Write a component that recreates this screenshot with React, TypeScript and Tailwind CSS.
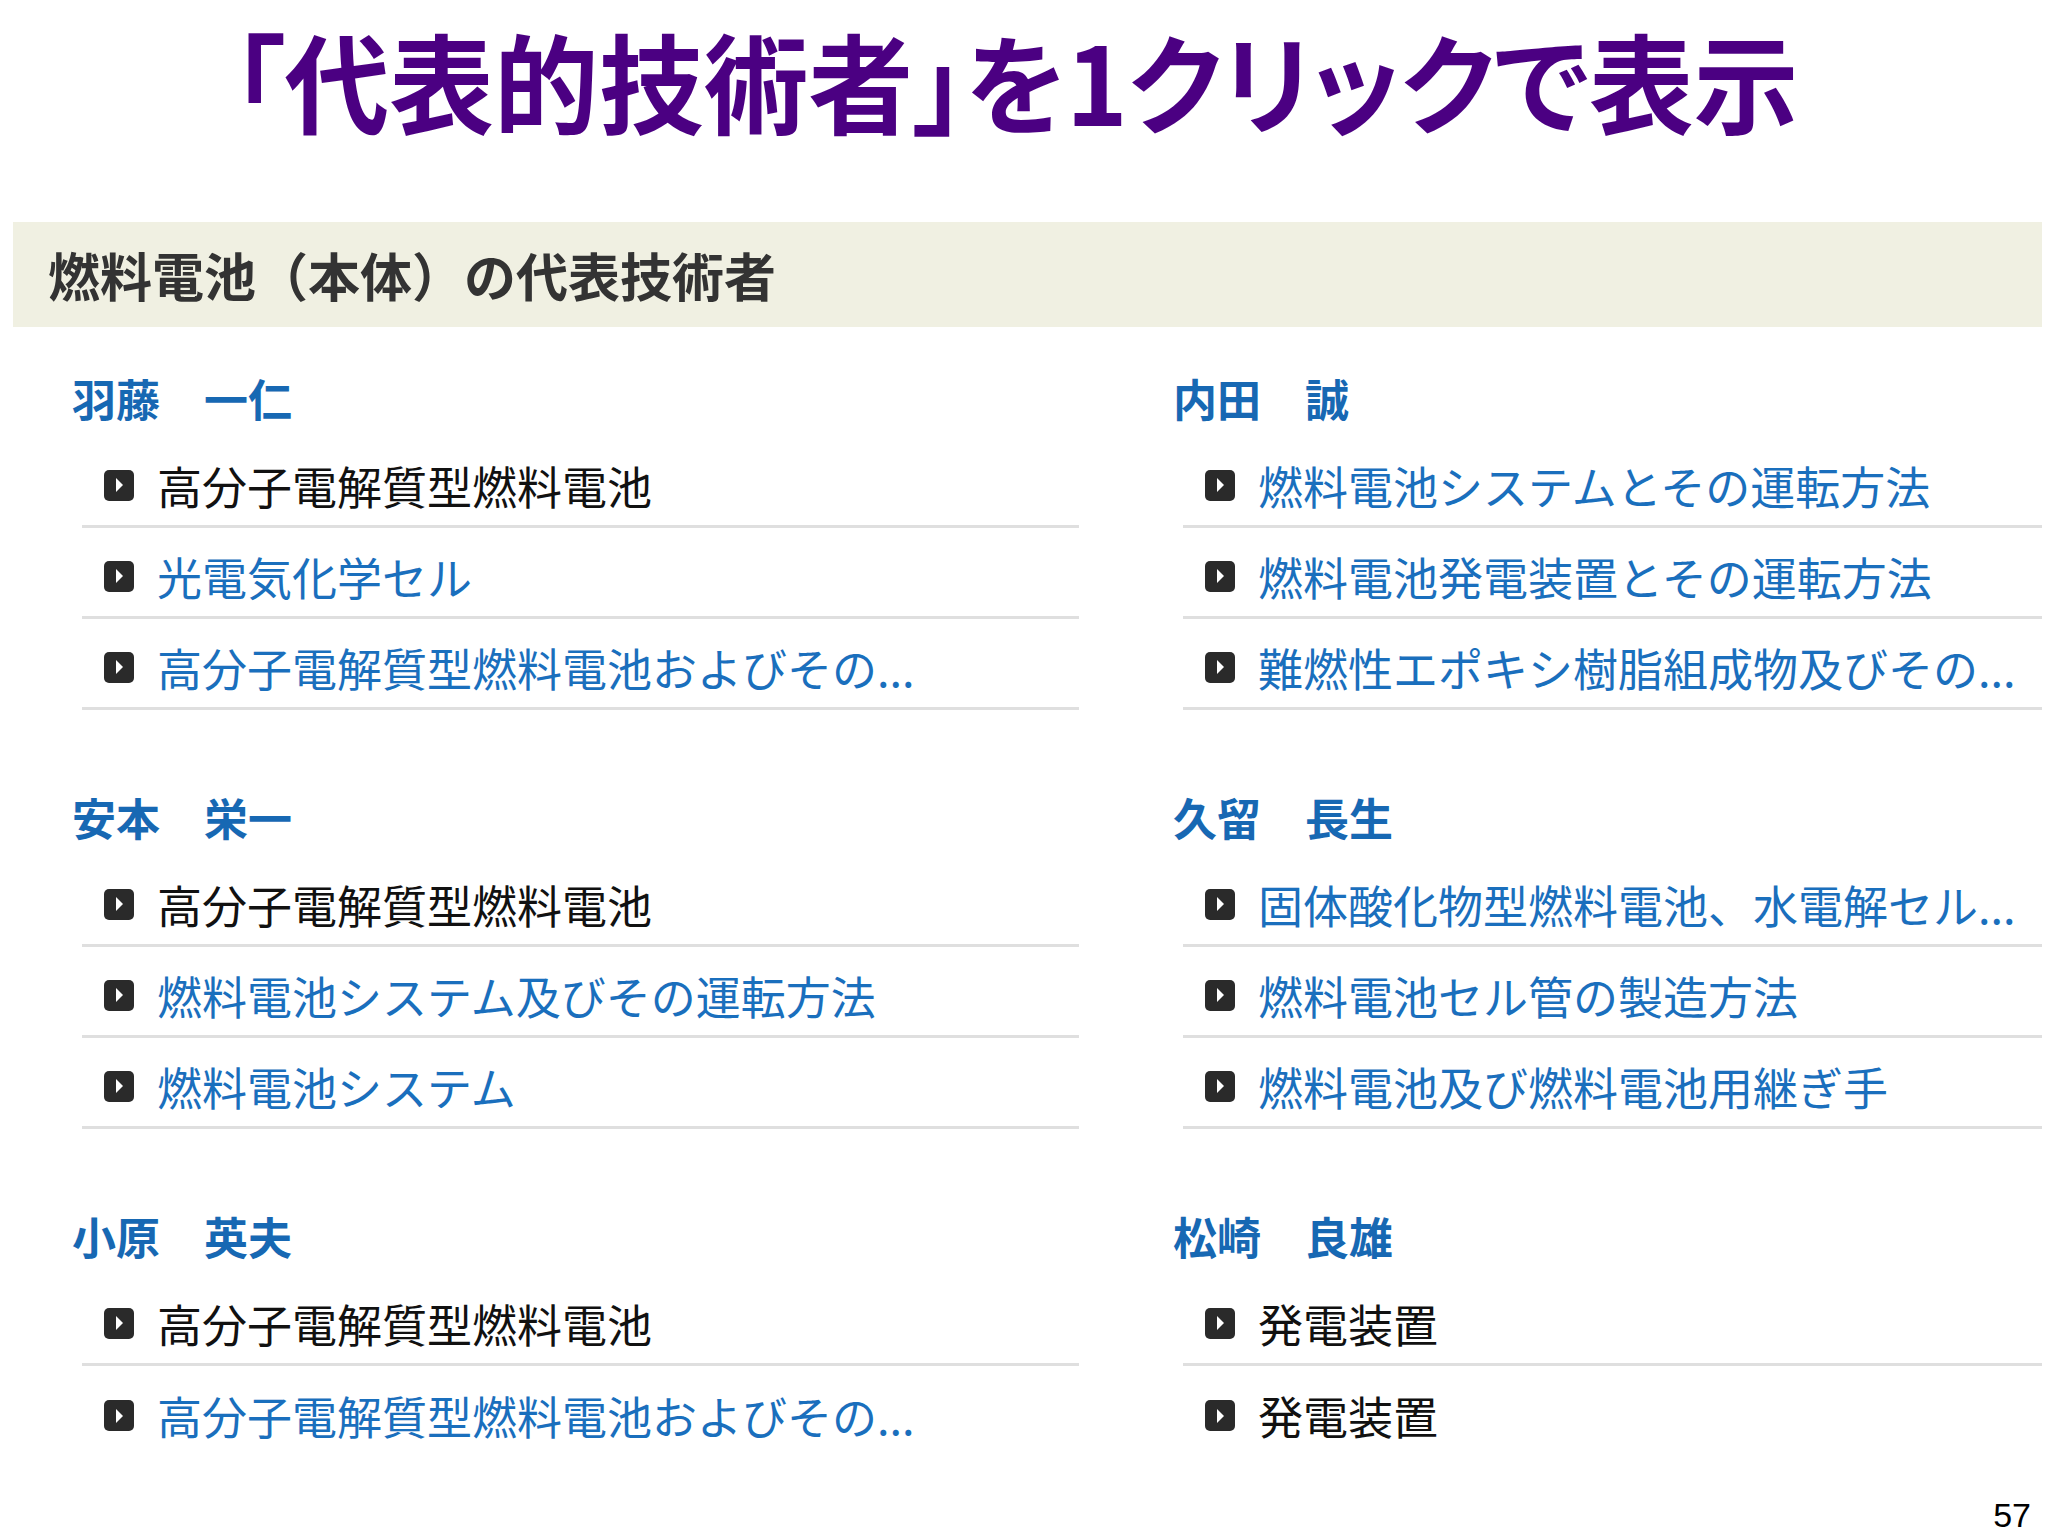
type Item = { text: string; link?: boolean };
type Group = { name: string; items: Item[]; lastBorder?: boolean };

const left: Group[] = [
  {
    name: "羽藤　一仁",
    items: [
      { text: "高分子電解質型燃料電池" },
      { text: "光電気化学セル", link: true },
      { text: "高分子電解質型燃料電池およびその...", link: true },
    ],
  },
  {
    name: "安本　栄一",
    items: [
      { text: "高分子電解質型燃料電池" },
      { text: "燃料電池システム及びその運転方法", link: true },
      { text: "燃料電池システム", link: true },
    ],
  },
  {
    name: "小原　英夫",
    lastBorder: false,
    items: [
      { text: "高分子電解質型燃料電池" },
      { text: "高分子電解質型燃料電池およびその...", link: true },
    ],
  },
];

const right: Group[] = [
  {
    name: "内田　誠",
    items: [
      { text: "燃料電池システムとその運転方法", link: true },
      { text: "燃料電池発電装置とその運転方法", link: true },
      { text: "難燃性エポキシ樹脂組成物及びその...", link: true },
    ],
  },
  {
    name: "久留　長生",
    items: [
      { text: "固体酸化物型燃料電池、水電解セル...", link: true },
      { text: "燃料電池セル管の製造方法", link: true },
      { text: "燃料電池及び燃料電池用継ぎ手", link: true },
    ],
  },
  {
    name: "松崎　良雄",
    lastBorder: false,
    items: [{ text: "発電装置" }, { text: "発電装置" }],
  },
];

function Bullet() {
  return (
    <span className="flex h-[31px] w-[30px] shrink-0 items-center justify-center rounded-[5px] bg-[#2a2a2a]">
      <svg width="8" height="14" viewBox="0 0 8 14">
        <path d="M1 0 L8 7 L1 14 Z" fill="#fff" />
      </svg>
    </span>
  );
}

function Column({ groups }: { groups: Group[] }) {
  return (
    <div className="flex flex-col gap-y-[68px]">
      {groups.map((g) => (
        <div key={g.name}>
          <div className="flex h-[78px] items-center text-[44px] font-bold leading-none text-[#1768b3]">
            {g.name}
          </div>
          <ul className="ml-[10px]">
            {g.items.map((it, i) => {
              const noBorder = g.lastBorder === false && i === g.items.length - 1;
              return (
                <li
                  key={i}
                  className={
                    noBorder
                      ? "flex h-[91px] items-center pt-[8px]"
                      : "flex h-[91px] items-center border-b-[3px] border-[#dfdfdf] pt-[8px]"
                  }
                >
                  <span className="ml-[22px]">
                    <Bullet />
                  </span>
                  <span
                    className={
                      it.link
                        ? "ml-[23px] whitespace-nowrap text-[45px] leading-none text-[#1a6fbd]"
                        : "ml-[23px] whitespace-nowrap text-[45px] leading-none text-[#111]"
                    }
                  >
                    {it.text}
                  </span>
                </li>
              );
            })}
          </ul>
        </div>
      ))}
    </div>
  );
}

export default function App() {
  return (
    <div className="flex h-[1536px] w-[2048px] flex-col overflow-hidden bg-white font-['Noto_Sans_CJK_JP','Noto_Sans',sans-serif]">
      <div className="flex h-[158px] items-center justify-center pr-[17px]">
        <h1 className="inline-block scale-x-[0.97] whitespace-nowrap text-[108px] font-bold leading-none text-[#4b0082] [font-feature-settings:'palt']">
          「代表的技術者」を1クリックで表示
        </h1>
      </div>

      <div className="ml-[13px] mt-[64px] flex h-[105px] w-[2029px] items-center bg-[#f0f0e2] pl-[35px]">
        <h2 className="text-[52px] font-bold leading-none text-[#333]">燃料電池（本体）の代表技術者</h2>
      </div>

      <div className="mt-[32px] grid grid-cols-[1007px_869px] gap-x-[94px] pl-[72px]">
        <Column groups={left} />
        <Column groups={right} />
      </div>

      <div className="mt-auto flex justify-end pb-[4px] pr-[17px]">
        <span className="font-['Liberation_Sans',Arial,sans-serif] text-[34px] leading-none text-black">57</span>
      </div>
    </div>
  );
}
